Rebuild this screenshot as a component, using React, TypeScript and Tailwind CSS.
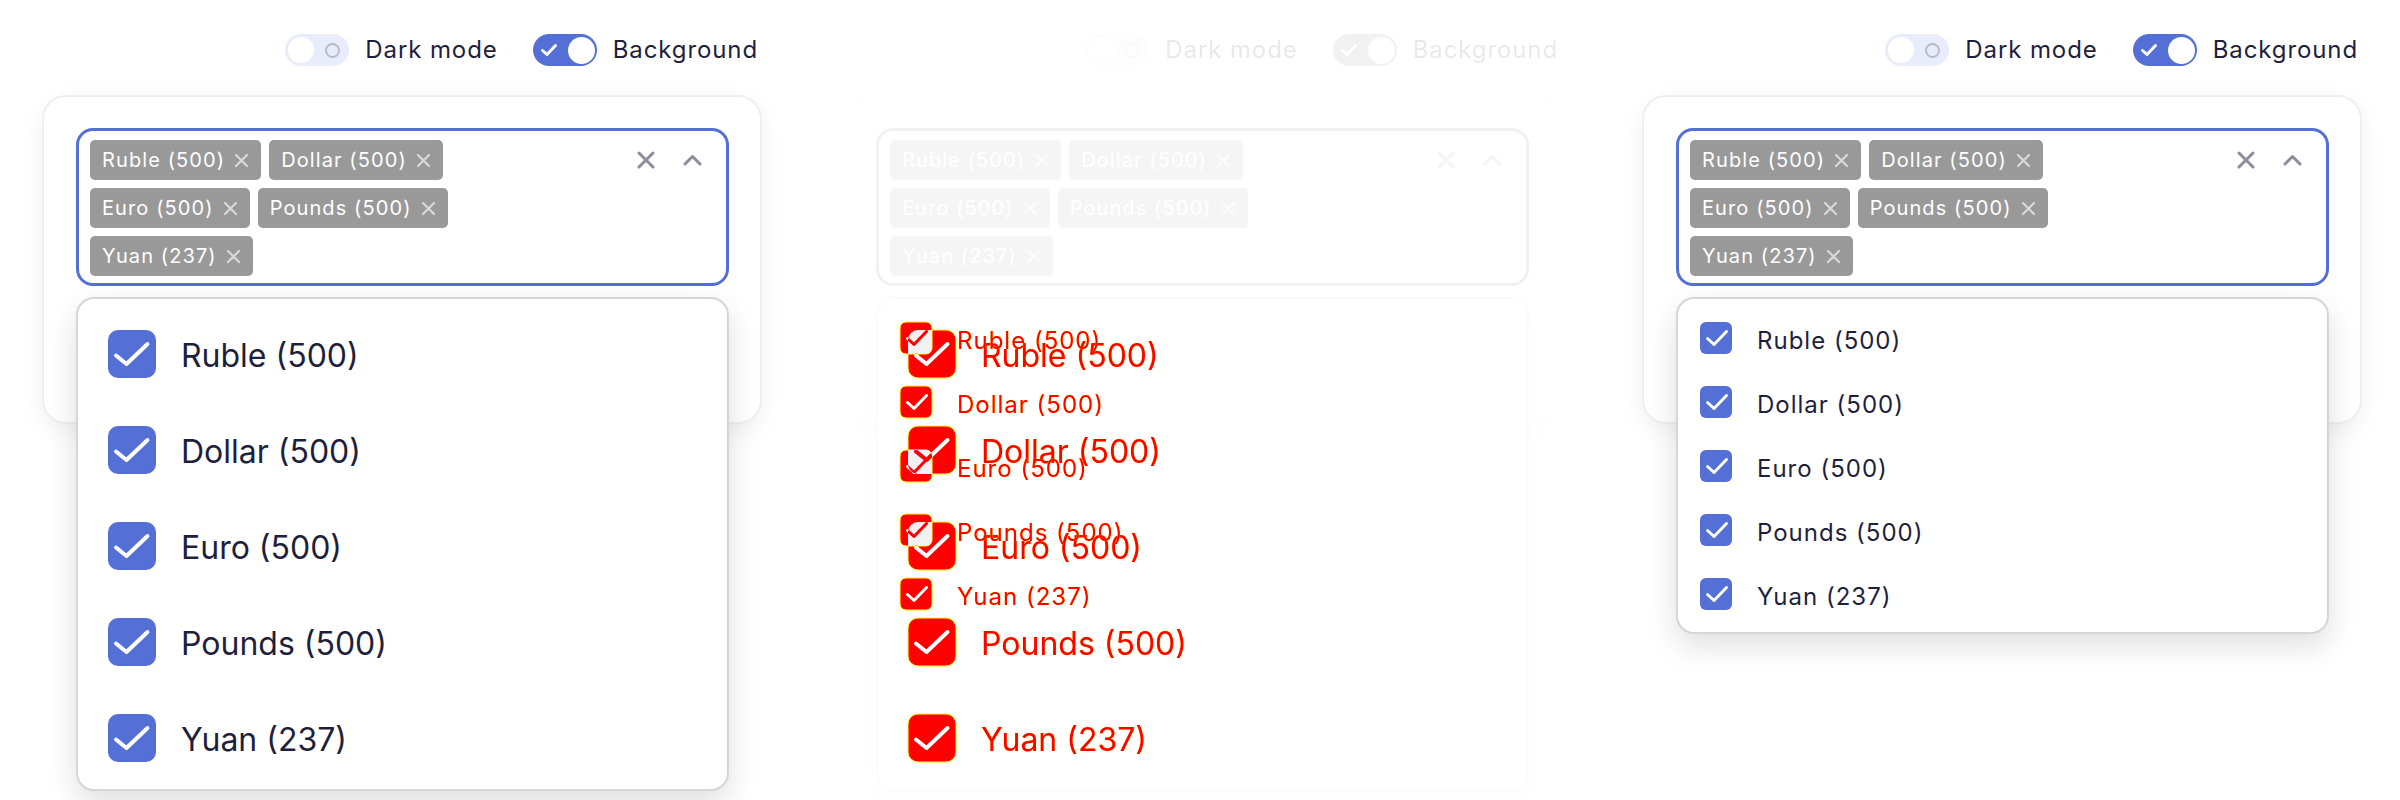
import React from 'react';

const ITEMS = ['Ruble (500)', 'Dollar (500)', 'Euro (500)', 'Pounds (500)', 'Yuan (237)'];

function Toggle({ on }: { on: boolean }) {
  if (on) {
    return (
      <div className="w-16 h-8 rounded-full bg-[#5470d6] flex items-center justify-between pl-[7px] pr-[2px]">
        <svg width="18" height="14" viewBox="0 0 18 14">
          <path d="M2.5 7.5 L7 11.5 L15.5 2.5" stroke="white" strokeWidth="3" fill="none" strokeLinecap="round" strokeLinejoin="round" />
        </svg>
        <div className="w-[27px] h-[27px] rounded-full bg-white" />
      </div>
    );
  }
  return (
    <div className="w-16 h-8 rounded-full bg-[#e9ecfb] flex items-center justify-between pl-[3px] pr-[9px]">
      <div className="w-[26px] h-[26px] rounded-full bg-white" />
      <div className="w-[15px] h-[15px] rounded-full border-2 border-[#b7b9c6]" />
    </div>
  );
}

function Tag({ label }: { label: string }) {
  return (
    <div className="h-10 rounded-[5px] bg-[#999999] flex items-center pl-3 pr-3 gap-[9px] text-white text-[20px] leading-none tracking-[1.1px]">
      <span>{label}</span>
      <svg width="15" height="15" viewBox="0 0 15 15">
        <path d="M2 2 L13 13 M13 2 L2 13" stroke="#d9d9d9" strokeWidth="2.2" strokeLinecap="round" />
      </svg>
    </div>
  );
}

function Input() {
  return (
    <div className="h-[158px] rounded-[17px] border-[3px] border-[#5470d6] bg-white flex pl-[11px] pt-[9px] pr-[24px]">
      <div className="flex-1 flex flex-col gap-2">
        <div className="flex gap-2">
          <Tag label="Ruble (500)" />
          <Tag label="Dollar (500)" />
        </div>
        <div className="flex gap-2">
          <Tag label="Euro (500)" />
          <Tag label="Pounds (500)" />
        </div>
        <div className="flex gap-2">
          <Tag label="Yuan (237)" />
        </div>
      </div>
      <div className="h-10 flex items-center gap-[28px]">
        <svg width="18" height="18" viewBox="0 0 18 18">
          <path d="M2 2 L16 16 M16 2 L2 16" stroke="#8c8d9b" strokeWidth="3" strokeLinecap="round" />
        </svg>
        <svg width="19" height="12" viewBox="0 0 19 12">
          <path d="M2 10 L9.5 2.5 L17 10" stroke="#8c8d9b" strokeWidth="3" fill="none" strokeLinecap="round" strokeLinejoin="round" />
        </svg>
      </div>
    </div>
  );
}

function BigCheck() {
  return (
    <div className="w-12 h-12 rounded-[10px] bg-[#5470d6] shrink-0">
      <svg width="48" height="48" viewBox="0 0 48 48">
        <path d="M8 25.5 L18.5 34 L39.5 14" stroke="white" strokeWidth="4" fill="none" strokeLinecap="round" strokeLinejoin="round" />
      </svg>
    </div>
  );
}

function SmallCheck() {
  return (
    <div className="w-8 h-8 rounded-[6px] bg-[#5470d6] shrink-0">
      <svg width="32" height="32" viewBox="0 0 32 32">
        <path d="M7.5 16.5 L14 22.5 L26.5 9.5" stroke="white" strokeWidth="3" fill="none" strokeLinecap="round" strokeLinejoin="round" />
      </svg>
    </div>
  );
}

function BigList({ red }: { red?: boolean }) {
  return (
    <div className="pt-[7px] pb-[3px]">
      {ITEMS.map((t) => (
        <div key={t} className="h-[96px] flex items-center pl-[30px] gap-[25px]">
          {red ? <div className="w-12 h-12 shrink-0" /> : <BigCheck />}
          <span
            className={
              red
                ? 'pt-[3px] text-[32px] leading-none text-[#ff0000] [text-shadow:0_0_1px_#ffff00]'
                : 'pt-[3px] text-[32px] leading-none text-[#1e1f3c]'
            }
          >
            {t}
          </span>
        </div>
      ))}
    </div>
  );
}

function SmallList({ red }: { red?: boolean }) {
  return (
    <div className="pt-[7px] pb-[6px]">
      {ITEMS.map((t) => (
        <div key={t} className="h-[64px] flex items-center pl-[22px] gap-[25px]">
          {red ? <div className="w-8 h-8 shrink-0" /> : <SmallCheck />}
          <span
            className={
              red
                ? 'pt-[5px] text-[24px] leading-none tracking-[1px] text-[#ff0000] [text-shadow:0_0_1px_#ffff00]'
                : 'pt-[5px] text-[24px] leading-none tracking-[1px] text-[#1e1f3c]'
            }
          >
            {t}
          </span>
        </div>
      ))}
    </div>
  );
}

function Panel({ list }: { list: 'big' | 'small' | 'empty' }) {
  return (
    <div className="w-[800px] h-[800px] shrink-0 pl-[42px] pt-[34px]">
      <div className="w-[720px] flex items-center justify-end pr-[4px] gap-[35px] text-[24px] leading-8 tracking-[0.9px] text-[#1e1f3c]">
        <div className="flex items-center gap-4">
          <Toggle on={false} />
          <span>Dark mode</span>
        </div>
        <div className="flex items-center gap-4">
          <Toggle on />
          <span>Background</span>
        </div>
      </div>
      <div className="mt-[29px] w-[720px] h-[329px] rounded-[24px] border-2 border-[#efefef] bg-white shadow-[0_8px_24px_rgba(0,0,0,0.06)] pl-[32px] pt-[31px]">
        <div className="relative w-[653px]">
          <Input />
          <div className="absolute left-0 right-0 top-[calc(100%+11px)] z-10 rounded-[18px] border-2 border-[#d6d6d6] bg-white shadow-[0_12px_30px_rgba(0,0,0,0.13)]">
            {list === 'small' ? <SmallList /> : list === 'big' ? <BigList /> : <div className="h-[490px]" />}
          </div>
        </div>
      </div>
    </div>
  );
}

const bigY = (i: number) => 31 + 96 * i;
const smallY = (j: number) => 23 + 64 * j;
const bigCheckPath = (i: number) => `M${30 + 8} ${bigY(i) + 25.5} L${30 + 18.5} ${bigY(i) + 34} L${30 + 39.5} ${bigY(i) + 14}`;
const smallCheckPath = (j: number) => `M${22 + 7.5} ${smallY(j) + 16.5} L${22 + 14} ${smallY(j) + 22.5} L${22 + 26.5} ${smallY(j) + 9.5}`;
const OVERLAPS: [number, number][] = [
  [0, 0],
  [1, 2],
  [2, 3],
];

function DiffChecks() {
  const idx = [0, 1, 2, 3, 4];
  return (
    <svg className="absolute left-0 top-0" width="90" height="490" viewBox="0 0 90 490">
      <defs>
        {idx.map((i) => (
          <clipPath key={'b' + i} id={'clipb' + i}>
            <rect x="30" y={bigY(i)} width="48" height="48" rx="10" />
          </clipPath>
        ))}
        {idx.map((j) => (
          <clipPath key={'s' + j} id={'clips' + j}>
            <rect x="22" y={smallY(j)} width="32" height="32" rx="6" />
          </clipPath>
        ))}
      </defs>
      {idx.map((i) => (
        <rect key={'rb' + i} x="30" y={bigY(i)} width="48" height="48" rx="10" fill="#ff0000" stroke="#ffff00" strokeWidth="1" />
      ))}
      {idx.map((j) => (
        <rect key={'rs' + j} x="22" y={smallY(j)} width="32" height="32" rx="6" fill="#ff0000" stroke="#ffff00" strokeWidth="1" />
      ))}
      {idx.map((i) => (
        <path key={'cb' + i} d={bigCheckPath(i)} stroke="white" strokeWidth="4" fill="none" strokeLinecap="round" strokeLinejoin="round" />
      ))}
      {idx.map((j) => (
        <path key={'cs' + j} d={smallCheckPath(j)} stroke="white" strokeWidth="3" fill="none" strokeLinecap="round" strokeLinejoin="round" />
      ))}
      {OVERLAPS.map(([i, j]) => (
        <g key={'o' + i} clipPath={`url(#clips${j})`}>
          <g clipPath={`url(#clipb${i})`}>
            <rect x="0" y="0" width="90" height="490" fill="#f1f1f1" />
            <path d={bigCheckPath(i)} stroke="#ff0000" strokeWidth="4" fill="none" strokeLinecap="round" strokeLinejoin="round" />
            <path d={smallCheckPath(j)} stroke="#ff0000" strokeWidth="3" fill="none" strokeLinecap="round" strokeLinejoin="round" />
          </g>
        </g>
      ))}
    </svg>
  );
}

function DiffPanel() {
  return (
    <div className="relative w-[800px] h-[800px] shrink-0">
      <div className="opacity-10 grayscale">
        <Panel list="empty" />
      </div>
      <div className="absolute left-[78px] top-[299px] w-[651px] h-[490px]">
        <div className="absolute inset-0">
          <BigList red />
        </div>
        <div className="absolute inset-0">
          <SmallList red />
        </div>
        <DiffChecks />
      </div>
    </div>
  );
}

export default function App() {
  return (
    <div className="flex w-[2400px] h-[800px] bg-white overflow-hidden [font-family:Inter,'Noto_Sans',sans-serif]">
      <Panel list="big" />
      <DiffPanel />
      <Panel list="small" />
    </div>
  );
}
